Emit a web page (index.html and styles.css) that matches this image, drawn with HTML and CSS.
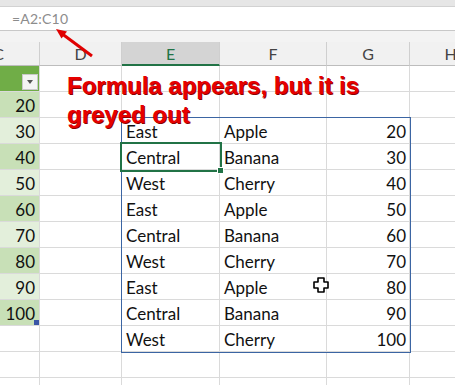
FILE: index.html
```html
<!DOCTYPE html>
<html>
<head>
<meta charset="utf-8">
<link rel="stylesheet" href="styles.css">
</head>
<body>
<div class="app">
  <div class="top"></div>
  <div class="fbar"><span class="ftext">=A2:C10</span></div>
  <div class="gap"></div>
  <div class="grid">
    <div class="hd">C</div><div class="hd">D</div><div class="hd sel">E</div><div class="hd">F</div><div class="hd">G</div><div class="hd">H</div>

    <div class="c th"><span class="fbtn"><span class="tri"></span></span></div><div class="c"></div><div class="c"></div><div class="c"></div><div class="c"></div><div class="c"></div>

    <div class="c num b1">20</div><div class="c"></div><div class="c"></div><div class="c"></div><div class="c"></div><div class="c"></div>
    <div class="c num b2">30</div><div class="c"></div><div class="c">East</div><div class="c">Apple</div><div class="c num g">20</div><div class="c"></div>
    <div class="c num b1">40</div><div class="c"></div><div class="c">Central</div><div class="c">Banana</div><div class="c num g">30</div><div class="c"></div>
    <div class="c num b2">50</div><div class="c"></div><div class="c">West</div><div class="c">Cherry</div><div class="c num g">40</div><div class="c"></div>
    <div class="c num b1">60</div><div class="c"></div><div class="c">East</div><div class="c">Apple</div><div class="c num g">50</div><div class="c"></div>
    <div class="c num b2">70</div><div class="c"></div><div class="c">Central</div><div class="c">Banana</div><div class="c num g">60</div><div class="c"></div>
    <div class="c num b1">80</div><div class="c"></div><div class="c">West</div><div class="c">Cherry</div><div class="c num g">70</div><div class="c"></div>
    <div class="c num b2">90</div><div class="c"></div><div class="c">East</div><div class="c">Apple</div><div class="c num g">80</div><div class="c"></div>
    <div class="c num b1">100</div><div class="c"></div><div class="c">Central</div><div class="c">Banana</div><div class="c num g">90</div><div class="c"></div>
    <div class="c"></div><div class="c"></div><div class="c">West</div><div class="c">Cherry</div><div class="c num g">100</div><div class="c"></div>
    <div class="c"></div><div class="c"></div><div class="c"></div><div class="c"></div><div class="c"></div><div class="c"></div>
    <div class="c"></div><div class="c"></div><div class="c"></div><div class="c"></div><div class="c"></div><div class="c"></div>
  </div>

  <div class="range"></div>
  <div class="selcell"></div>
  <div class="handle"></div>
  <div class="tblhandle"></div>

  <div class="note">Formula appears, but it is<br>greyed out</div>

  <svg class="arrow" width="120" height="70" viewBox="0 0 120 70">
    <line x1="92" y1="56" x2="63" y2="34.5" stroke="#e00000" stroke-width="3"/>
    <polygon points="56,29 67,31.5 61.5,38.5" fill="#e00000"/>
  </svg>

  <svg class="cursor" width="16" height="16" viewBox="0 0 16 16">
    <polygon points="5,1 11,1 11,5 15,5 15,11 11,11 11,15 5,15 5,11 1,11 1,5 5,5" fill="#fff" stroke="#000" stroke-width="1.6" stroke-linejoin="round"/>
  </svg>
</div>
</body>
</html>
```

FILE: styles.css
```css
body {
  margin: 0;
  background: #fff;
}

.app {
  position: relative;
  width: 455px;
  height: 385px;
  overflow: hidden;
  background: #fff;
  font-family: Lato, "Liberation Sans", sans-serif;
}

.top {
  height: 6px;
  background: #e6e6e6;
}

.fbar {
  box-sizing: border-box;
  height: 25px;
  background: #fff;
  border-top: 1px solid #d2d2d2;
  border-bottom: 1px solid #c8c8c8;
  padding-left: 12px;
  display: flex;
  align-items: center;
}

.ftext {
  font-size: 14px;
  color: #8c8c8c;
  letter-spacing: 0.2px;
}

.gap {
  height: 11px;
  background: #f3f3f3;
}

.grid {
  display: grid;
  grid-template-columns: 82px 82px 98px 107px 83px 82px;
  grid-template-rows: 24px;
  grid-auto-rows: 26px;
  margin-left: -42px;
  width: 534px;
}

.hd {
  box-sizing: border-box;
  background: #f1f1f1;
  border-right: 1px solid #cfcfcf;
  border-bottom: 1px solid #bdbdbd;
  text-align: center;
  line-height: 23px;
  font-size: 16px;
  color: #444;
}

.hd.sel {
  background: #d4d4d4;
  border-bottom: 2px solid #217346;
  color: #217346;
}

.c {
  box-sizing: border-box;
  border-right: 1px solid #dadada;
  border-bottom: 1px solid #dadada;
  font-size: 17px;
  line-height: 25px;
  padding: 1px 4px 0 4px;
  color: #111;
  white-space: nowrap;
  overflow: hidden;
}

.num {
  text-align: right;
  padding-right: 4px;
}

.num.g {
  padding-right: 3px;
}

.b1 {
  background: #c8e0b7;
}

.b2 {
  background: #e3efdb;
}

.th {
  background: #70ad47;
  display: flex;
  justify-content: flex-end;
  align-items: flex-end;
  padding: 0 1px 1px 0;
}

.fbtn {
  box-sizing: border-box;
  width: 16px;
  height: 16px;
  background: #f4f4f4;
  border: 1px solid #c9c9c9;
  display: flex;
  align-items: center;
  justify-content: center;
}

.tri {
  width: 0;
  height: 0;
  border-left: 3.5px solid transparent;
  border-right: 3.5px solid transparent;
  border-top: 4px solid #555;
}

.range {
  position: absolute;
  box-sizing: border-box;
  left: 121px;
  top: 117px;
  width: 290px;
  height: 236px;
  border: 1px solid #3b65a3;
}

.selcell {
  position: absolute;
  box-sizing: border-box;
  left: 120px;
  top: 142px;
  width: 102px;
  height: 30px;
  border: 2px solid #217346;
}

.handle {
  position: absolute;
  box-sizing: border-box;
  left: 217px;
  top: 167px;
  width: 7px;
  height: 7px;
  background: #217346;
  border: 1px solid #fff;
}

.tblhandle {
  position: absolute;
  left: 34px;
  top: 320px;
  width: 5px;
  height: 5px;
  background: #3a55a6;
}

.note {
  position: absolute;
  left: 67px;
  top: 71px;
  font-family: "Liberation Sans", Arial, sans-serif;
  font-weight: bold;
  font-size: 24px;
  line-height: 29px;
  color: #e60000;
  text-shadow: 1px 1px 0 #8a0000;
  white-space: nowrap;
}

.arrow {
  position: absolute;
  left: 0;
  top: 0;
}

.cursor {
  position: absolute;
  left: 313px;
  top: 277px;
}
```
